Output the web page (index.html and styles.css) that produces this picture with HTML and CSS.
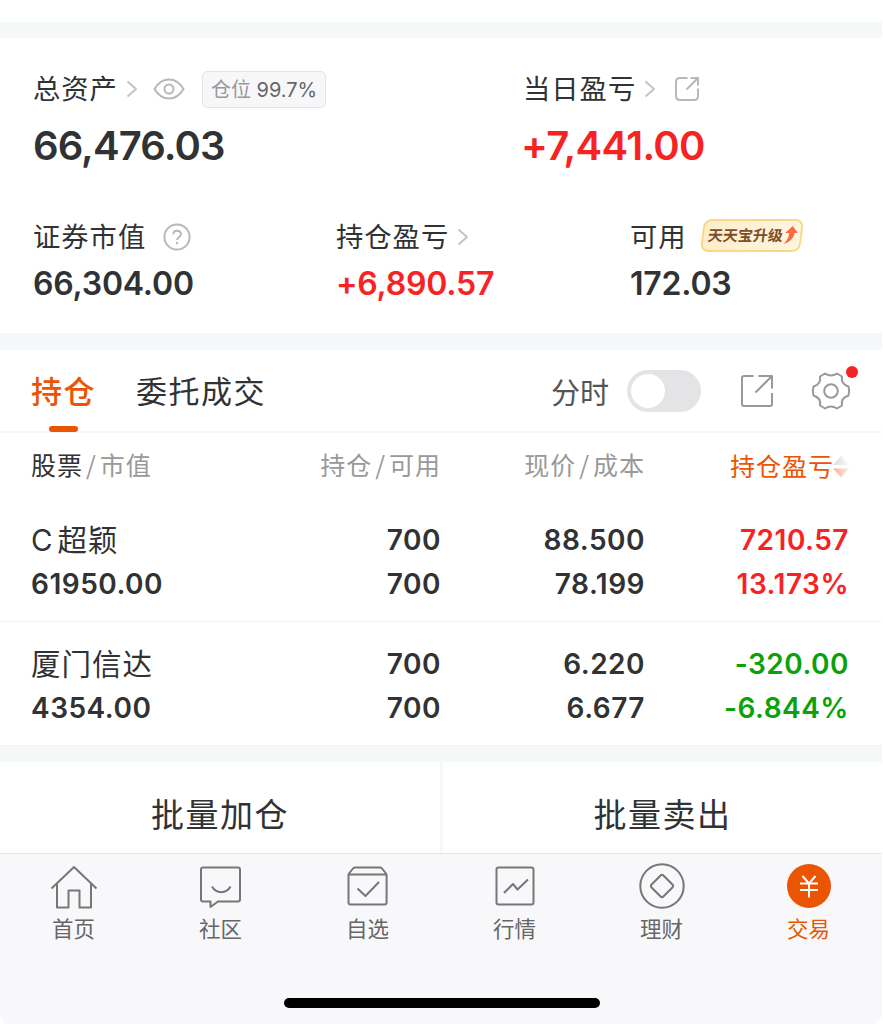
FILE: index.html
```html
<!DOCTYPE html>
<html lang="zh-CN">
<head>
  <meta charset="UTF-8">
  <title>交易</title>
  <link rel="stylesheet" href="styles.css">
</head>

<body>
  <div class="container">
    <!-- 资产 -->
    <section class="assets">
      <div class="assets-top">
        <div class="item">
          <div class="label">
            <span class="text">总资产</span>
            <svg class="arrow" width="12" height="18" viewBox="0 0 12 18"><path d="M1.500 1.500 10 9l-8.500 7.500"/></svg>
            <svg class="eye" width="32" height="22" viewBox="0 0 32 22"><path d="M1.500 11C5 5 10 1.500 16 1.500S27 5 30.500 11C27 17 22 20.500 16 20.500S5 17 1.500 11z"/><circle cx="16" cy="11" r="4.500"/></svg>
            <span class="ratio">仓位 <b>99.7%</b></span>
          </div>
          <div class="value">66,476.03</div>
        </div>
        <div class="item">
          <div class="label">
            <span class="text">当日盈亏</span>
            <svg class="arrow" width="12" height="18" viewBox="0 0 12 18"><path d="M1.500 1.500 10 9l-8.500 7.500"/></svg>
            <svg class="share" width="26" height="26" viewBox="0 0 26 26"><path d="M13.500 2H6Q2 2 2 6v14q0 4 4 4h14q4 0 4-4v-7.500M12.500 13.500 23 3M16.500 2H24v7.500"/></svg>
          </div>
          <div class="value red profit">+7,441.00</div>
        </div>
      </div>
      <div class="assets-bottom">
        <div class="item">
          <div class="label">
            <span class="text">证券市值</span>
            <svg class="help" width="28" height="28" viewBox="0 0 28 28"><circle cx="14" cy="14" r="12.600"/><path d="M10.300 11.500c0-2.300 1.500-3.800 3.800-3.800s3.800 1.400 3.800 3.500c0 2.600-3.800 3-3.800 5.800"/><path d="M14 19v2.300"/></svg>
          </div>
          <div class="value">66,304.00</div>
        </div>
        <div class="item">
          <div class="label">
            <span class="text">持仓盈亏</span>
            <svg class="arrow" width="12" height="18" viewBox="0 0 12 18"><path d="M1.500 1.500 10 9l-8.500 7.500"/></svg>
          </div>
          <div class="value red">+6,890.57</div>
        </div>
        <div class="item">
          <div class="label">
            <span class="text">可用</span>
            <div class="upgrade">
              <span>天天宝升级</span>
              <svg width="14" height="18" viewBox="0 0 14 18"><path d="M7.500 0 13.500 7h-3.200c-.3 5-3.600 9-9.800 11 3.200-3 4.500-6.500 4.500-11H1z"/></svg>
            </div>
          </div>
          <div class="value">172.03</div>
        </div>
      </div>
    </section>

    <!-- 持仓 / 委托成交 -->
    <nav class="tabs">
      <a class="tab active">持仓</a>
      <a class="tab">委托成交</a>
      <div class="tools">
        <span class="minute">分时</span>
        <span class="switch"></span>
        <svg class="open" width="34" height="34" viewBox="0 0 34 34"><path d="M13.500 2H4Q2 2 2 4v26q0 2 2 2h26q2 0 2-2V19M15.500 18.500 31 3M18.500 2H32v12.500"/></svg>
        <div class="setting">
          <svg width="40" height="40" viewBox="0 0 40 40"><path d="M14 2.500Q20 6.500 26 2.500L31 5.500Q29.500 13 37.500 15.500Q38.800 20 37.500 24.500Q29.500 27 31 34.500L26 37.500Q20 33.500 14 37.500L9 34.500Q10.500 27 2.500 24.500Q1.200 20 2.500 15.500Q10.500 13 9 5.500z"/><circle cx="20" cy="20" r="6.800"/></svg>
          <i class="dot"></i>
        </div>
      </div>
    </nav>

    <section class="stocks">
      <div class="row head">
        <div><em>股票</em><s>/</s>市值</div>
        <div>持仓<s>/</s>可用</div>
        <div>现价<s>/</s>成本</div>
        <div class="sort">
          持仓盈亏
          <svg width="16" height="22" viewBox="0 0 16 22">
            <defs>
              <linearGradient id="up"><stop offset="0" stop-color="#ddd"/><stop offset="1" stop-color="#f8f8f8"/></linearGradient>
              <linearGradient id="down"><stop offset="0" stop-color="#f4ae8c"/><stop offset="1" stop-color="#fdeee6"/></linearGradient>
            </defs>
            <path fill="url(#up)" d="M8 0l8 9H0z"/>
            <path fill="url(#down)" d="M0 12.500h16l-8 9z"/>
          </svg>
        </div>
      </div>
      <div class="row">
        <div><span class="name"><span class="mark">C</span>超颖</span><span>61950.00</span></div>
        <div><span>700</span><span>700</span></div>
        <div><span>88.500</span><span>78.199</span></div>
        <div class="red"><span>7210.57</span><span>13.173%</span></div>
      </div>
      <div class="row">
        <div><span class="name">厦门信达</span><span>4354.00</span></div>
        <div><span>700</span><span>700</span></div>
        <div><span>6.220</span><span>6.677</span></div>
        <div class="green"><span>-320.00</span><span>-6.844%</span></div>
      </div>
    </section>

    <div class="batch">
      <button type="button">批量加仓</button>
      <button type="button">批量卖出</button>
    </div>

    <!-- 底部菜单 -->
    <footer class="footer">
      <ul class="menu">
        <li>
          <svg width="48" height="48" viewBox="0 0 48 48"><path d="M1.500 25.500 24 4l22.500 21.500M7 21v23.500h11.500v-17h11v17H41V21"/></svg>
          <span>首页</span>
        </li>
        <li>
          <svg width="48" height="48" viewBox="0 0 48 48"><path d="M6 4.500h35q2 0 2 2v30q0 2-2 2H21l-7.500 5.500v-5.500H6q-2 0-2-2v-30q0-2 2-2z"/><path d="M15 23.500c4 7.500 14.500 7.500 18.500 0"/></svg>
          <span>社区</span>
        </li>
        <li>
          <svg width="48" height="48" viewBox="0 0 48 48"><path d="M5 10.500 9 5.500q.800-1 2-1h25q1.200 0 2 1l4 5q.600 1 .6 2v27q0 2-2 2H6.500q-2 0-2-2v-27q0-1 .5-2zM5 11.500h37.500"/><path d="M13.500 25.500l8 7.500L35 19"/></svg>
          <span>自选</span>
        </li>
        <li>
          <svg width="48" height="48" viewBox="0 0 48 48"><rect x="5.500" y="4.500" width="37" height="37" rx="2"/><path d="M13 30l9-9 4.500 5.500L37 16.500"/></svg>
          <span>行情</span>
        </li>
        <li>
          <svg width="48" height="48" viewBox="0 0 48 48"><circle cx="24" cy="23" r="21.700"/><path d="M22.600 12.500q1.400-1.400 2.800 0l9 9q1.400 1.500 0 3l-9 9q-1.400 1.400-2.800 0l-9-9q-1.400-1.500 0-3z"/></svg>
          <span>理财</span>
        </li>
        <li class="on">
          <svg width="48" height="48" viewBox="0 0 48 48"><circle class="coin" cx="24" cy="23" r="22"/><path class="yen" d="M17.500 13 24 20.500 30.500 13M15 20.500h18M15 27h18M24 20.500V34.500"/></svg>
          <span>交易</span>
        </li>
      </ul>
      <div class="home-bar"></div>
    </footer>
  </div>
</body>
</html>
```

FILE: styles.css
```css
* {
  box-sizing: border-box;
  margin: 0;
  padding: 0;
}
body {
  background: #fff;
  color: #303233;
  font-family: Inter, "Noto Sans CJK SC", sans-serif;
}
svg {
  display: block;
  flex: none;
  fill: none;
  stroke: #b8b8b8;
  stroke-width: 2;
  stroke-linejoin: round;
}
.container {
  width: 882px;
  height: 1024px;
  padding-top: 22px;
  overflow: hidden;
}
.red {
  color: #f92222;
}
.green {
  color: #0aa20a;
}

/* 资产 */
.assets {
  height: 328px;
  padding: 26px 0 0 33px;
  border-top: 16px solid #f4f8f9;
  border-bottom: 17px solid #f4f8f9;
}
.assets-top {
  display: grid;
  grid-template-columns: 490px 1fr;
}
.assets-bottom {
  display: grid;
  grid-template-columns: 303px 294px 1fr;
  margin-top: 34px;
}
.label {
  display: flex;
  align-items: center;
  height: 50px;
  font-size: 27.3px;
  letter-spacing: 1px;
}
.label .text {
  padding-bottom: 4px;
}
.value {
  height: 64px;
  line-height: 64px;
  font-size: 40px;
  font-weight: 600;
  letter-spacing: -0.9px;
}
.profit {
  margin-left: -2px;
  letter-spacing: -0.7px;
}
.assets-bottom .value {
  height: 42px;
  line-height: 43px;
  font-size: 32px;
  letter-spacing: -0.2px;
}
.arrow {
  margin-left: 8px;
  stroke: #c4c4c4;
}
.eye {
  margin-left: 15px;
}
.share {
  margin-left: 18px;
}
.help {
  margin-left: 17px;
}
.ratio {
  height: 37px;
  margin-left: 17px;
  padding: 0 8px;
  line-height: 36px;
  border: 1px solid #e3e4e6;
  border-radius: 5px;
  background: #f7f7fa;
  color: #999;
  font-size: 20px;
  letter-spacing: 0;
}
.ratio b {
  color: #666;
  font-weight: 400;
}
.upgrade {
  display: flex;
  align-items: center;
  width: 100px;
  height: 33px;
  margin: -3px 0 0 15px;
  padding-left: 4px;
  border: 2px solid #fbd984;
  border-radius: 8px;
  background: linear-gradient(90deg, #feedcb, #fff5df);
  color: #7d4e2b;
  font-size: 15px;
  font-weight: 700;
  letter-spacing: 0;
  transform: skewX(-7deg);
}
.upgrade span {
  padding-bottom: 2px;
}
.upgrade svg {
  margin: -2px 0 0 1px;
  fill: #ff6740;
  stroke: none;
}

/* 标签栏 */
.tabs {
  display: flex;
  height: 83px;
  padding: 0 31px;
  border-bottom: 2px solid #f5f6f7;
  font-size: 31px;
}
.tab {
  height: 82px;
  line-height: 84px;
  margin-right: 40px;
  letter-spacing: 1.5px;
}
.tab.active {
  color: #eb5502;
  font-weight: 500;
}
.tab.active::after {
  content: "";
  display: block;
  width: 29px;
  height: 6px;
  margin: -8px auto 0;
  border-radius: 3px;
  background: #eb5502;
}
.tools {
  display: flex;
  align-items: center;
  height: 82px;
  margin-left: auto;
  color: #555;
  font-size: 29px;
}
.switch {
  width: 74px;
  height: 42px;
  margin-left: 18px;
  padding: 4px;
  border-radius: 21px;
  background: #e4e4e6;
}
.switch::before {
  content: "";
  display: block;
  width: 34px;
  height: 34px;
  border-radius: 50%;
  background: #fff;
}
.tools svg {
  stroke: #999;
}
.open {
  margin-left: 39px;
}
.setting {
  position: relative;
  margin-left: 37px;
}
.dot {
  position: absolute;
  top: -5px;
  right: -7px;
  width: 12px;
  height: 12px;
  border-radius: 50%;
  background: #f92222;
}

/* 持仓列表 */
.row {
  display: grid;
  grid-template-columns: 210px 200px 204px 204px;
  height: 124px;
  padding: 20px 0 0 31px;
  border-bottom: 1px solid #f0f2f3;
  font-size: 28px;
  font-weight: 600;
  letter-spacing: 0.5px;
  line-height: 44px;
  text-align: right;
}
.row div:first-child {
  text-align: left;
}
.row span {
  display: block;
}
.row .name {
  font-size: 29.5px;
  font-weight: 400;
  letter-spacing: 1px;
}
.row .mark {
  display: inline-block;
  margin-right: 4px;
}
.row.head {
  height: 65px;
  padding-top: 10px;
  border: none;
  color: #999;
  font-family: "Noto Sans CJK SC", sans-serif;
  font-size: 25px;
  font-weight: 400;
  letter-spacing: 1px;
  line-height: 43px;
}
.head em {
  color: #303233;
  font-style: normal;
}
.head s {
  padding: 0 3px;
  text-decoration: none;
}
.head .sort {
  display: flex;
  align-items: center;
  justify-content: flex-end;
  height: 44px;
  color: #eb5502;
}
.sort svg {
  margin: 3px 0 0 -1px;
  stroke: none;
}

/* 批量按钮 */
.batch {
  display: grid;
  grid-template-columns: 440px 1fr;
  gap: 3px;
  height: 107px;
  padding-top: 16px;
  background: #f4f8f9;
}
.batch button {
  padding-top: 11px;
  border: none;
  background: #fff;
  color: #303233;
  font-family: inherit;
  font-size: 33px;
  letter-spacing: 1.5px;
}

/* 底部菜单 */
.footer {
  height: 172px;
  border-top: 1px solid #e3e5e8;
  border-radius: 0 0 12px 12px;
  background: #f8f8fb;
}
.menu {
  display: grid;
  grid-template-columns: repeat(6, 147px);
  height: 144px;
  padding-top: 9px;
  list-style: none;
}
.menu li {
  display: flex;
  flex-direction: column;
  align-items: center;
  color: #666;
  font-size: 21.5px;
  line-height: 36px;
}
.menu svg {
  stroke: #777;
}
.menu .on {
  color: #eb5502;
}
.menu .coin {
  fill: #eb5502;
  stroke: none;
}
.menu .yen {
  stroke: #fff;
}
.home-bar {
  width: 316px;
  height: 10px;
  margin: 0 0 0 284px;
  border-radius: 5px;
  background: #000;
}
```
